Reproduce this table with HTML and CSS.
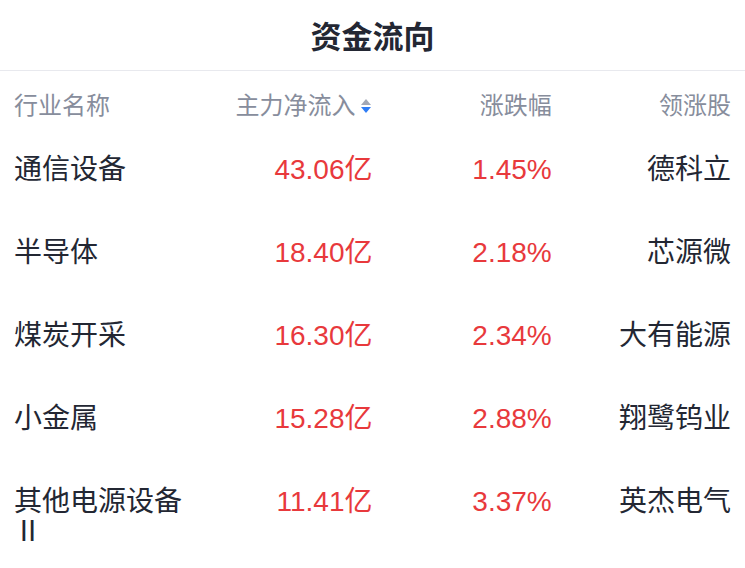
FILE: index.html
```html
<!DOCTYPE html>
<html lang="zh">
<head>
<meta charset="utf-8">
<link rel="stylesheet" href="styles.css">
</head>
<body>
<div class="title">资金流向</div>
<div class="table">
  <div class="row head">
    <div class="c c1">行业名称</div>
    <div class="c c2">主力净流入<span class="sort"><span class="up"></span><span class="down"></span></span></div>
    <div class="c c3">涨跌幅</div>
    <div class="c c4">领涨股</div>
  </div>
  <div class="row">
    <div class="c c1">通信设备</div>
    <div class="c c2 red">43.06亿</div>
    <div class="c c3 red">1.45%</div>
    <div class="c c4">德科立</div>
  </div>
  <div class="row">
    <div class="c c1">半导体</div>
    <div class="c c2 red">18.40亿</div>
    <div class="c c3 red">2.18%</div>
    <div class="c c4">芯源微</div>
  </div>
  <div class="row">
    <div class="c c1">煤炭开采</div>
    <div class="c c2 red">16.30亿</div>
    <div class="c c3 red">2.34%</div>
    <div class="c c4">大有能源</div>
  </div>
  <div class="row">
    <div class="c c1">小金属</div>
    <div class="c c2 red">15.28亿</div>
    <div class="c c3 red">2.88%</div>
    <div class="c c4">翔鹭钨业</div>
  </div>
  <div class="row">
    <div class="c c1">其他电源设备Ⅱ</div>
    <div class="c c2 red">11.41亿</div>
    <div class="c c3 red">3.37%</div>
    <div class="c c4">英杰电气</div>
  </div>
</div>
</body>
</html>
```
FILE: styles.css
```css
html, body {
  margin: 0;
  padding: 0;
  background: #ffffff;
}
body {
  font-family: "Liberation Sans", "Noto Sans CJK SC", sans-serif;
  color: #232733;
  width: 745px;
  height: 568px;
  overflow: hidden;
}
.title {
  height: 70px;
  line-height: 70px;
  text-align: center;
  font-size: 31px;
  font-weight: 700;
  color: #232733;
  border-bottom: 1px solid #e8e9ee;
  font-family: "Noto Sans CJK SC", sans-serif;
}
.table {
  padding: 0 14px;
}
.row {
  display: grid;
  grid-template-columns: repeat(4, 1fr);
  align-items: start;
  padding: 28px 0 25px;
  font-size: 28px;
  line-height: 30px;
}
.row.head {
  padding: 20px 0 6px;
  font-size: 24px;
  color: #878d9c;
}
.c1 {
  text-align: left;
}
.c2, .c3, .c4 {
  text-align: right;
}
.red {
  color: #e8393c;
}
.sort {
  display: inline-flex;
  flex-direction: column;
  gap: 2px;
  vertical-align: middle;
  margin-left: 5px;
  margin-right: 2px;
  position: relative;
  top: -2px;
}
.up {
  width: 0;
  height: 0;
  border-left: 5px solid transparent;
  border-right: 5px solid transparent;
  border-bottom: 6px solid #a3a8b5;
}
.down {
  width: 0;
  height: 0;
  border-left: 5px solid transparent;
  border-right: 5px solid transparent;
  border-top: 6px solid #2f7df6;
}
```
